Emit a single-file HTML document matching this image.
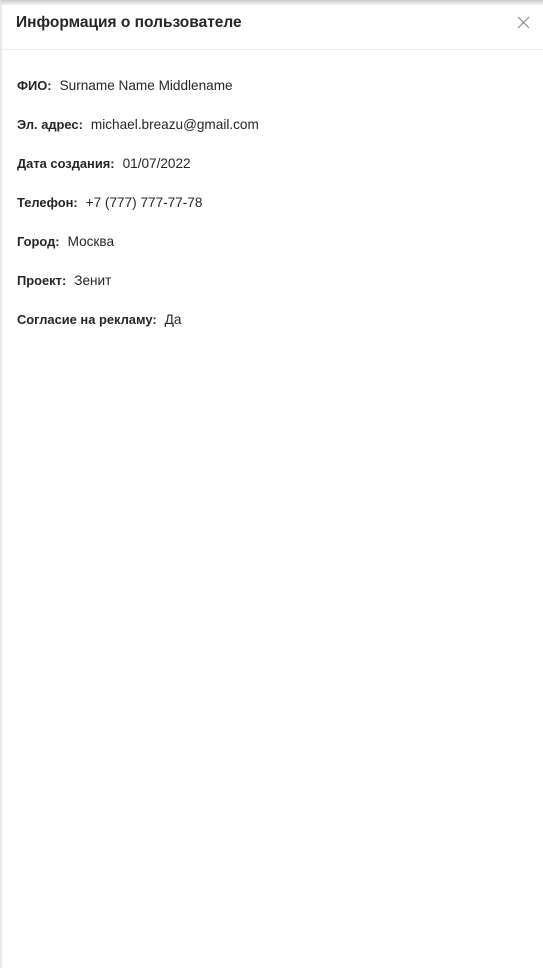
<!DOCTYPE html>
<html><head><meta charset="utf-8"><style>
html,body{margin:0;padding:0;width:543px;height:968px;background:#fff;overflow:hidden}
body{font-family:"Liberation Sans","DejaVu Sans",sans-serif;color:#262626;position:relative}
.shadowtop{position:absolute;left:0;top:0;width:543px;height:6px;background:linear-gradient(#c8c8c8,rgba(255,255,255,0))}
.shadowleft{position:absolute;left:0;top:0;width:3px;height:968px;background:linear-gradient(90deg,#e0e0e0,rgba(255,255,255,0))}
.hdr{position:absolute;left:0;top:0;width:543px;height:49px;border-bottom:1px solid #ececec}
.title{position:absolute;left:16px;top:14px;font-size:15.5px;font-weight:600;color:#262626}
.x{position:absolute;left:517px;top:16px}
.row{position:absolute;left:17px;font-size:13px;color:#262626;white-space:nowrap}
.row b{font-weight:600;font-size:12.9px}
.row i{font-style:normal;margin-left:8px;font-size:13.6px}
</style></head><body>
<div class="hdr"></div>
<div class="shadowtop"></div>
<div class="shadowleft"></div>
<div class="title">Информация о пользователе</div>
<svg class="x" width="13" height="13" viewBox="0 0 13 13"><path d="M1 1L12 12M12 1L1 12" stroke="#8c8c8c" stroke-width="1.2" fill="none"/></svg>
<div class="row" style="top:78px"><b>ФИО:</b><i>Surname Name Middlename</i></div>
<div class="row" style="top:117px"><b>Эл. адрес:</b><i>michael.breazu@gmail.com</i></div>
<div class="row" style="top:156px"><b>Дата создания:</b><i>01/07/2022</i></div>
<div class="row" style="top:195px"><b>Телефон:</b><i>+7 (777) 777-77-78</i></div>
<div class="row" style="top:234px"><b>Город:</b><i>Москва</i></div>
<div class="row" style="top:273px"><b>Проект:</b><i>Зенит</i></div>
<div class="row" style="top:312px"><b>Согласие на рекламу:</b><i>Да</i></div>
</body></html>
